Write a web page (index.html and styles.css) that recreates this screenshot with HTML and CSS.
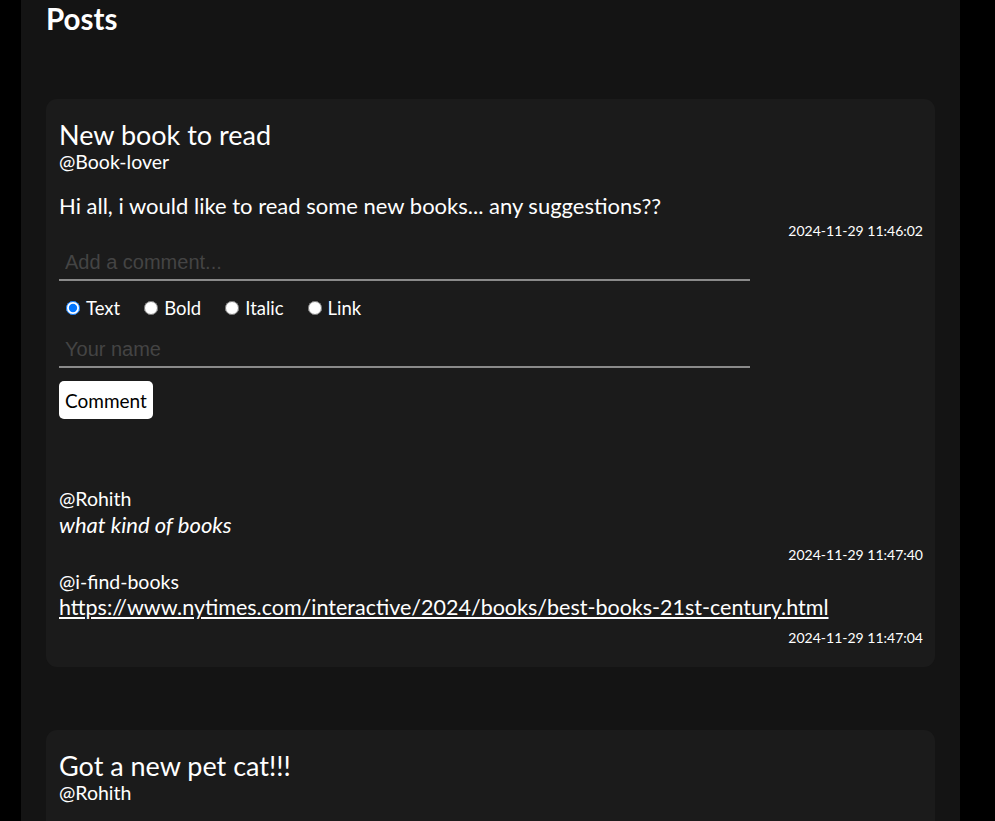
FILE: index.html
```html
<!DOCTYPE html>
<html>
<head>
<meta charset="utf-8">
<link rel="stylesheet" href="styles.css">
</head>
<body>
<main class="page">
  <h1 class="page-title">Posts</h1>

  <article class="post">
    <h2 class="post-title">New book to read</h2>
    <div class="author">@Book-lover</div>
    <p class="post-body">Hi all, i would like to read some new books... any suggestions??</p>
    <div class="time">2024-11-29 11:46:02</div>

    <form class="comment-form">
      <input class="field field-first" type="text" placeholder="Add a comment...">
      <div class="styles">
        <label class="opt"><input type="radio" name="s1" checked><span>Text</span></label>
        <label class="opt"><input type="radio" name="s1"><span>Bold</span></label>
        <label class="opt"><input type="radio" name="s1"><span>Italic</span></label>
        <label class="opt"><input type="radio" name="s1"><span>Link</span></label>
      </div>
      <input class="field" type="text" placeholder="Your name">
      <button class="btn" type="button">Comment</button>
    </form>

    <div class="comments">
      <div class="comment">
        <div class="author">@Rohith</div>
        <div class="c-body italic">what kind of books</div>
        <div class="time c-time">2024-11-29 11:47:40</div>
      </div>
      <div class="comment">
        <div class="author">@i-find-books</div>
        <div class="c-body link-body"><a class="link" href="#">https://www.nytimes.com/interactive/2024/books/best-books-21st-century.html</a></div>
        <div class="time c-time">2024-11-29 11:47:04</div>
      </div>
    </div>
  </article>

  <article class="post post-open">
    <h2 class="post-title">Got a new pet cat!!!</h2>
    <div class="author">@Rohith</div>
  </article>
</main>
</body>
</html>
```
FILE: styles.css
```css
html, body {
  margin: 0;
  padding: 0;
  background: #000;
  height: 100%;
  overflow: hidden;
}
body {
  font-family: "Lato", "Open Sans", sans-serif;
  color: #fff;
}
.page {
  margin-left: 21px;
  width: 939px;
  min-height: 100%;
  background: #141414;
  padding: 0 25px;
  box-sizing: border-box;
}
.page-title {
  margin: 0;
  padding-top: 2px;
  font-size: 29.5px;
  font-weight: 700;
  line-height: 34px;
  height: 99px;
  box-sizing: border-box;
}
.post {
  background: #1b1b1b;
  border-radius: 11px;
  padding: 19px 12px 20px 13px;
  margin-bottom: 63px;
}
.post-open {
  min-height: 120px;
}
.post-title {
  margin: 0;
  font-size: 27px;
  font-weight: 400;
  line-height: 33px;
}
.author {
  font-size: 19.5px;
  line-height: 22px;
}
.post-body {
  margin: 19px 0 0;
  font-size: 22px;
  line-height: 28px;
}
.time {
  margin-top: 2px;
  text-align: right;
  font-size: 14px;
  line-height: 18px;
}
.c-time {
  margin-top: 7px;
}
.comment-form {
  display: flex;
  flex-direction: column;
  align-items: flex-start;
  width: 691px;
}
.field {
  width: 691px;
  height: 43px;
  box-sizing: border-box;
  background: transparent;
  border: none;
  border-bottom: 2px solid #8a8a8a;
  color: #fff;
  font-family: "Liberation Sans", Arial, sans-serif;
  font-size: 20px;
  padding: 7px 6px 0 6px;
  outline: none;
}
.field-first {
  height: 41px;
  padding-top: 5px;
}
.field::placeholder {
  color: #444;
}
.styles {
  display: flex;
  align-items: center;
  gap: 17px;
  padding: 9px 0 0 0;
  height: 44px;
  box-sizing: border-box;
  font-size: 18.5px;
}
.opt {
  display: flex;
  align-items: center;
  gap: 6px;
}
.opt input {
  margin: 0 0 0 7px;
  width: 14px;
  height: 14px;
}
.btn {
  margin-top: 13px;
  background: #fff;
  color: #000;
  border: none;
  border-radius: 5px;
  font-family: "Lato", sans-serif;
  font-size: 19px;
  padding: 0 6px;
  height: 38px;
}
.comments {
  margin-top: 69px;
}
.comment {
  margin-bottom: 7px;
}
.comment:last-child {
  margin-bottom: 0;
}
.c-body {
  font-size: 22px;
  line-height: 29px;
}
.link-body {
  font-size: 21.5px;
}
.italic {
  font-style: italic;
}
.link {
  color: #fff;
  text-decoration: underline;
}
```
